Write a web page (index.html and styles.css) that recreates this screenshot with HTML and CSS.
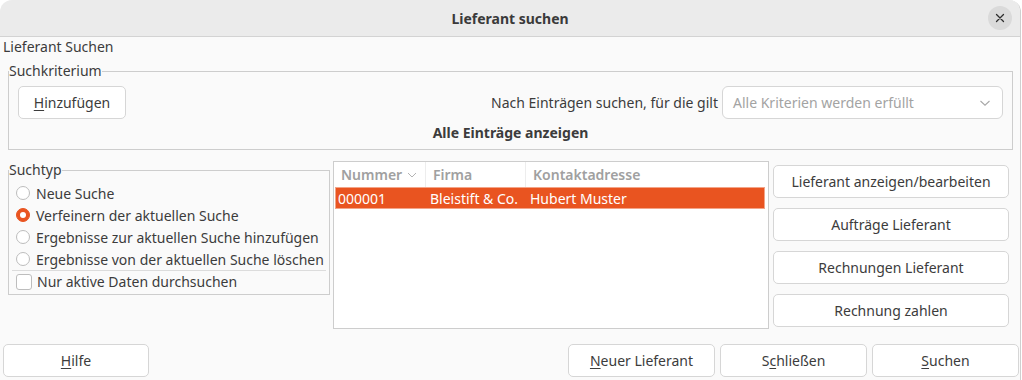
FILE: index.html
```html
<!DOCTYPE html>
<html lang="de">
<head>
<meta charset="utf-8">
<title>Lieferant suchen</title>
<link rel="stylesheet" href="styles.css">
</head>
<body>
<div class="window">
  <header class="titlebar">
    <span class="title">Lieferant suchen</span>
    <button class="close" aria-label="Schließen">
      <svg width="10" height="10" viewBox="0 0 10 10"><path d="M1.5 1.5L8.5 8.5M8.5 1.5L1.5 8.5" stroke="#2e2e2e" stroke-width="1.3" stroke-linecap="round"/></svg>
    </button>
  </header>
  <main class="content">
    <div class="caption">Lieferant Suchen</div>
    <fieldset class="group criteria">
      <legend>Suchkriterium</legend>
      <div class="crit-row">
        <button class="btn add"><u>H</u>inzufügen</button>
        <span class="crit-label">Nach Einträgen suchen, für die gilt</span>
        <div class="select">
          <span class="placeholder">Alle Kriterien werden erfüllt</span>
          <svg class="chev" width="12" height="8" viewBox="0 0 12 8"><path d="M1.5 2L6 6.2L10.5 2" fill="none" stroke="#a8a8a8" stroke-width="1.1"/></svg>
        </div>
      </div>
      <div class="show-all">Alle Einträge anzeigen</div>
    </fieldset>

    <div class="middle">
      <fieldset class="group suchtyp">
        <legend>Suchtyp</legend>
        <div class="opt"><span class="radio"></span>Neue Suche</div>
        <div class="opt"><span class="radio on"></span>Verfeinern der aktuellen Suche</div>
        <div class="opt"><span class="radio"></span>Ergebnisse zur aktuellen Suche hinzufügen</div>
        <div class="opt"><span class="radio"></span>Ergebnisse von der aktuellen Suche löschen</div>
        <div class="sep"></div>
        <div class="opt check-row"><span class="check"></span>Nur aktive Daten durchsuchen</div>
      </fieldset>

      <div class="list">
        <div class="list-head">
          <div class="col c1">Nummer <svg class="sort" width="10" height="6" viewBox="0 0 10 6"><path d="M1 1L5 5L9 1" fill="none" stroke="#b4b4b4" stroke-width="1"/></svg></div>
          <div class="col c2">Firma</div>
          <div class="col c3">Kontaktadresse</div>
        </div>
        <div class="list-row selected">
          <div class="cell c1">000001</div>
          <div class="cell c2">Bleistift &amp; Co.</div>
          <div class="cell c3">Hubert Muster</div>
        </div>
      </div>

      <div class="side">
        <button class="btn">Lieferant anzeigen/bearbeiten</button>
        <button class="btn">Aufträge Lieferant</button>
        <button class="btn">Rechnungen Lieferant</button>
        <button class="btn">Rechnung zahlen</button>
      </div>
    </div>

    <footer class="footer">
      <button class="btn foot"><u>H</u>ilfe</button>
      <span class="grow"></span>
      <button class="btn foot"><u>N</u>euer Lieferant</button>
      <button class="btn foot">S<u>c</u>hließen</button>
      <button class="btn foot"><u>S</u>uchen</button>
    </footer>
  </main>
</div>
</body>
</html>
```

FILE: styles.css
```css
* { box-sizing: border-box; }
html, body {
  margin: 0;
  padding: 0;
  width: 1022px;
  height: 380px;
  overflow: hidden;
  background: #ffffff;
}
body {
  font-family: "Noto Sans", "Open Sans", sans-serif;
  font-size: 14px;
  color: #3c3c3c;
}
.window {
  width: 1021px;
  height: 380px;
  background: #fafafa;
  border-radius: 12px 12px 0 0;
  border-right: 1px solid #cfcfcf;
  overflow: hidden;
  display: flex;
  flex-direction: column;
}
.titlebar {
  height: 37px;
  flex: none;
  background: #ebebeb;
  border-bottom: 1px solid #d3d3d3;
  display: flex;
  align-items: center;
  justify-content: center;
  position: relative;
}
.title {
  font-weight: 700;
  font-size: 14px;
  color: #3a3a3a;
}
.close {
  position: absolute;
  right: 8px;
  top: 6px;
  width: 24px;
  height: 24px;
  border-radius: 50%;
  border: none;
  background: #dadada;
  padding: 0;
  display: flex;
  align-items: center;
  justify-content: center;
}
.content {
  flex: 1;
  padding: 1px 1px 0 3px;
  display: flex;
  flex-direction: column;
}
.caption {
  line-height: 18px;
}
.group {
  margin: 0;
  border: 1px solid #cdcdcd;
  border-radius: 0;
  min-width: 0;
}
.group legend {
  padding: 0;
  line-height: 18px;
}
.criteria {
  margin: 6px 6px 0 5px;
  padding: 6px 9px 6px 9px;
}
.criteria legend { margin-left: -9px; }
.crit-row {
  display: flex;
  align-items: center;
  height: 33px;
}
.btn {
  font-family: inherit;
  font-size: 14px;
  color: #3c3c3c;
  background: #ffffff;
  border: 1px solid #d6d6d6;
  border-radius: 5px;
  height: 33px;
  padding: 0 8px;
  margin: 0;
  white-space: nowrap;
}
.btn u { text-decoration-thickness: 1px; text-underline-offset: 2px; }
.add { width: 108px; }
.crit-label {
  margin-left: auto;
  margin-right: 4px;
}
.select {
  width: 281px;
  height: 33px;
  border: 1px solid #d6d6d6;
  border-radius: 6px;
  background: #ffffff;
  display: flex;
  align-items: center;
  padding: 0 10px 0 10px;
}
.placeholder { color: #a3a3a3; flex: 1; }
.chev { flex: none; margin-right: 1px; }
.show-all {
  text-align: center;
  font-weight: 700;
  line-height: 20px;
  margin-top: 4px;
}

.middle {
  display: flex;
  align-items: flex-start;
  margin-top: 11px;
  margin-left: 5px;
}
.suchtyp {
  width: 322px;
  padding: 3px 3px 2px 3px;
}
.suchtyp legend { margin-left: -3px; }
.opt {
  display: flex;
  align-items: center;
  height: 22px;
  padding-left: 4px;
  white-space: nowrap;
}
.radio {
  width: 14px;
  height: 14px;
  border-radius: 50%;
  border: 1px solid #bdbdbd;
  background: #ffffff;
  margin-right: 6px;
  flex: none;
}
.radio.on {
  background: #e95420;
  border-color: #e95420;
  position: relative;
}
.radio.on::after {
  content: "";
  position: absolute;
  left: 3px;
  top: 3px;
  width: 6px;
  height: 6px;
  border-radius: 50%;
  background: #ffffff;
}
.sep {
  height: 1px;
  background: #dcdcdc;
}
.check-row { height: 21px; }
.check {
  width: 16px;
  height: 16px;
  border: 1px solid #bdbdbd;
  border-radius: 3px;
  background: #ffffff;
  margin-right: 5px;
  flex: none;
}

.list {
  width: 436px;
  height: 168px;
  margin-left: 3px;
  background: #ffffff;
  border: 1px solid #cdcdcd;
  padding: 0 3px 0 0;
}
.list-head {
  display: flex;
  height: 25px;
  align-items: stretch;
}
.col {
  color: #a0a0a0;
  font-weight: 600;
  display: flex;
  align-items: center;
  padding-left: 7px;
}
.col + .col { border-left: 1px solid #ededed; }
.c1 { width: 91px; flex: none; }
.c2 { width: 100px; flex: none; }
.c3 { flex: 1; }
.sort { margin-left: 5px; margin-top: 1px; }
.list-row {
  display: flex;
  height: 22px;
  align-items: center;
  margin-left: 1px;
}
.list-row.selected {
  background: #e95420;
  border: 1px solid #f3a488;
  color: #ffffff;
}
.cell { padding-left: 4px; }
.cell.c1 { width: 90px; padding-left: 2px; }

.side {
  margin-left: 4px;
  padding-top: 4px;
  display: flex;
  flex-direction: column;
  gap: 10px;
  width: 236px;
}
.side .btn { width: 236px; }

.footer {
  display: flex;
  gap: 5px;
  margin-top: 15px;
}
.grow { flex: 1; }
.foot { width: 147px; }
.footer .foot:first-child { width: 146px; }
```
